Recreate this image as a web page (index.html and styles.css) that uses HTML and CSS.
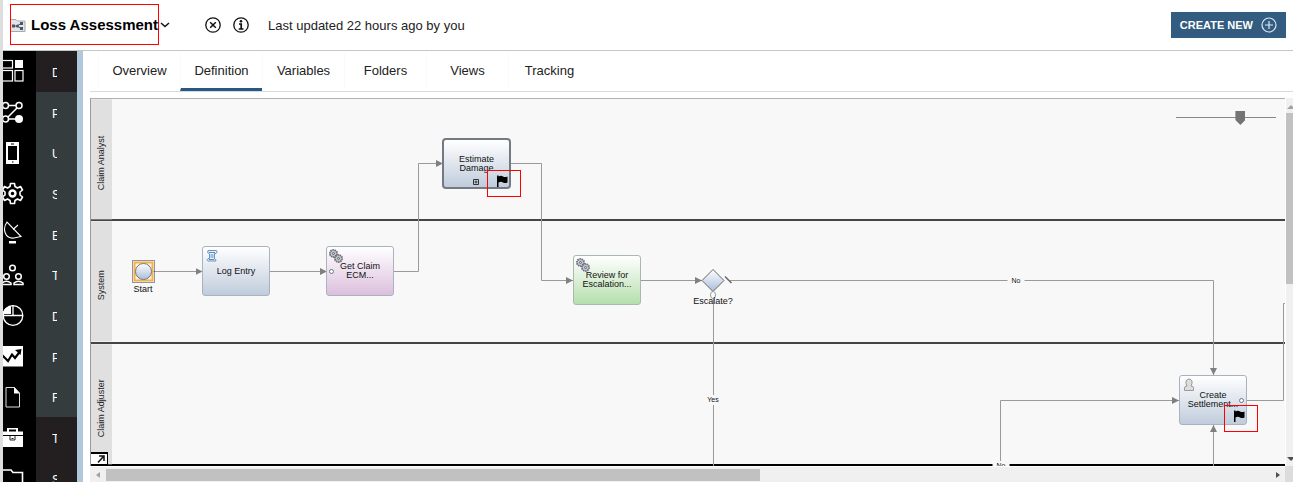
FILE: index.html
```html
<!DOCTYPE html>
<html lang="en">
<head>
<meta charset="utf-8">
<title>Loss Assessment</title>
<link rel="stylesheet" href="styles.css">
</head>
<body>
<div class="app">
  <header class="header">
    <div class="heading">
      <svg class="heading-icon" viewBox="0 0 15 16" width="15" height="16"><path d="M0 2.500H5L6.500 4H14V14.500H0" fill="#e4e4e4" stroke="#a9a9a9"/><path d="M3 9H6M6 9L10 6.500M6 9L10 11.500" stroke="#46586e" fill="none"/><rect x="1" y="7.500" width="3" height="3" fill="#46586e"/><circle cx="6.500" cy="9" r="1.600" fill="#46586e"/><rect x="9" y="5" width="3" height="3" fill="#46586e"/><rect x="9" y="10" width="3" height="3" fill="#46586e"/></svg>
      <h1 class="title">Loss Assessment</h1>
    </div>
    <button class="icon-button caret" aria-label="Open menu"><svg width="10" height="6" viewBox="0 0 10 6"><path d="M1 1L5 4.500L9 1" fill="none" stroke="#111" stroke-width="1.500"/></svg></button>
    <div class="header-tools">
      <button class="icon-button" aria-label="Close"><svg width="16" height="16" viewBox="0 0 16 16"><circle cx="8" cy="8" r="7.200" fill="none" stroke="#111" stroke-width="1.300"/><path d="M5.200 5.200L10.800 10.800M10.800 5.200L5.200 10.800" stroke="#111" stroke-width="1.500"/></svg></button>
      <button class="icon-button" aria-label="Information"><svg width="16" height="16" viewBox="0 0 16 16"><circle cx="8" cy="8" r="7.200" fill="none" stroke="#111" stroke-width="1.300"/><circle cx="8" cy="4.300" r="1.300" fill="#111"/><path d="M6 7H8.200V11.700M5.700 12H10.500" fill="none" stroke="#111" stroke-width="1.700"/></svg></button>
    </div>
    <p class="updated">Last updated 22 hours ago by you</p>
    <button class="create">CREATE NEW <svg width="16" height="16" viewBox="0 0 16 16"><g fill="none" stroke="#dce8f2" stroke-width="1.200"><circle cx="8" cy="8" r="7"/><path d="M8 4V12M4 8H12"/></g></svg></button>
  </header>

  <div class="body">
    <nav class="rail" aria-label="Categories">
      <button class="rail-item" aria-label="Dashboards"><svg viewBox="0 0 33 41"><g fill="none" stroke="#fff" stroke-width="1.200"><rect x="-1" y="9.500" width="10.500" height="7.500"/><rect x="-1" y="19.500" width="10.500" height="10.500"/><rect x="12" y="19.500" width="8" height="10.500"/></g><rect x="12" y="9" width="8" height="8" fill="#fff"/></svg></button>
      <button class="rail-item" aria-label="Processes"><svg viewBox="0 0 33 41"><g fill="none" stroke="#fff" stroke-width="1.500"><circle cx="2.500" cy="13.500" r="3"/><circle cx="16" cy="13.500" r="3"/><circle cx="2.500" cy="27" r="3"/><path d="M5.500 13.500H13M14 16L5 25M5.500 27H14"/></g><circle cx="16" cy="27" r="4" fill="#fff"/></svg></button>
      <button class="rail-item" aria-label="User interface"><svg viewBox="0 0 33 41"><path fill="#fff" fill-rule="evenodd" d="M3 9H16V31H3ZM5 13V27H14V13ZM8 10.500H11V11.500H8ZM9 28.500H10.500V29.500H9Z"/></svg></button>
      <button class="rail-item" aria-label="Services"><svg viewBox="0 0 33 41"><path fill="none" stroke="#fff" stroke-width="1.600" stroke-linejoin="round" d="M7.500 10.500H11.500L12 13.500L14.500 15L17.500 13.500L19.500 17L17 19V22L19.500 24L17.500 27.500L14.500 26L12 27.500L11.500 30.500H7.500L7 27.500L4.500 26L1.500 27.500L-.5 24L2 22V19L-.5 17L1.500 13.500L4.500 15L7 13.500Z"/><circle cx="9.500" cy="20.500" r="3" fill="none" stroke="#fff" stroke-width="2.400"/></svg></button>
      <button class="rail-item" aria-label="Events"><svg viewBox="0 0 33 41"><path fill="none" stroke="#fff" stroke-width="1.100" d="M4 8C-1 15 2 25 11 24L18 22.500ZM10 15.500L15 11"/><path fill="#fff" d="M6 27H13V29.500H6Z"/></svg></button>
      <button class="rail-item" aria-label="Teams"><svg viewBox="0 0 33 41"><g fill="none" stroke="#fff" stroke-width="1.500"><circle cx="9.500" cy="13" r="2.800"/><circle cx="3.500" cy="21.500" r="2.800"/><circle cx="15.500" cy="21.500" r="2.800"/><path d="M-1 29.500V28Q3.500 24.500 8 28V29.500ZM11 29.500V28Q15.500 24.500 20 28V29.500Z"/></g></svg></button>
      <button class="rail-item" aria-label="Data"><svg viewBox="0 0 33 41"><circle cx="10" cy="20.500" r="9.800" fill="none" stroke="#fff" stroke-width="1.300"/><path d="M-.5 20.500H20M10 10.500V20.500" stroke="#fff" stroke-width="1.300"/><path fill="#fff" d="M8 11V19H0V17Q2 12 8 11Z"/></svg></button>
      <button class="rail-item" aria-label="Performance"><svg viewBox="0 0 33 41"><path fill="#fff" d="M0 10H20V30.500H0Z"/><path d="M-1 19L5 25L9 18.500L12 22L17 15.500" fill="none" stroke="#000" stroke-width="2.200"/><path d="M12 14L18.500 13L17.500 19Z"/></svg></button>
      <button class="rail-item" aria-label="Files"><svg viewBox="0 0 33 41"><path fill="none" stroke="#ddd" d="M3 10.500H11.500L16.500 16V30H3Z"/><path fill="#fff" d="M11 10L17 16.500H11Z"/></svg></button>
      <button class="rail-item" aria-label="Toolkits"><svg viewBox="0 0 33 41"><path fill="#fff" fill-rule="evenodd" d="M4 11H15V14.500H20V18H0V14.500H4ZM6 12.500V14.500H13V12.500Z"/><path fill="#fff" d="M0 19H20V30H0Z"/><path fill="none" stroke="#222" d="M7 19V23H12V19M8.500 21.500H10.500"/></svg></button>
      <button class="rail-item" aria-label="Smart folders"><svg viewBox="0 0 33 41"><path fill="none" stroke="#fff" stroke-width="1.600" d="M-1 12H8L10 14.500H19.500V34H-1Z"/></svg></button>
    </nav>
    <nav class="library" aria-label="Library">
      <a class="library-item dark" href="#"><span>D</span></a>
      <a class="library-item" href="#"><span>P</span></a>
      <a class="library-item" href="#"><span>U</span></a>
      <a class="library-item" href="#"><span>S</span></a>
      <a class="library-item" href="#"><span>E</span></a>
      <a class="library-item" href="#"><span>T</span></a>
      <a class="library-item" href="#"><span>D</span></a>
      <a class="library-item" href="#"><span>P</span></a>
      <a class="library-item" href="#"><span>F</span></a>
      <a class="library-item dark" href="#"><span>T</span></a>
      <a class="library-item dark" href="#"><span>S</span></a>
    </nav>

    <main class="main">
      <nav class="tabs" aria-label="Process">
        <a class="tab" href="#">Overview</a>
        <a class="tab active" href="#">Definition</a>
        <a class="tab" href="#">Variables</a>
        <a class="tab" href="#">Folders</a>
        <a class="tab" href="#">Views</a>
        <a class="tab" href="#">Tracking</a>
      </nav>
      <div class="viewer">
        <div class="canvas">
          <div class="lanes">
            <section class="lane"><h2 class="lane-name">Claim Analyst</h2></section>
            <section class="lane"><h2 class="lane-name">System</h2></section>
            <section class="lane"><h2 class="lane-name">Claim Adjuster</h2></section>
          </div>

          <svg class="flows" width="1300" height="368" viewBox="91 99 1300 368">
            <defs>
              <marker id="arrow" viewBox="0 0 6 6" refX="6" refY="3" markerWidth="7" markerHeight="7" markerUnits="userSpaceOnUse" orient="auto"><path d="M0 0L6 3L0 6Z" fill="#808080"/></marker>
              <linearGradient id="blue" x2="0" y2="1"><stop stop-color="#fff"/><stop offset="1" stop-color="#a9bddb"/></linearGradient>
            </defs>
            <g fill="none" stroke="#9a9a9a" marker-end="url(#arrow)">
              <path d="M153 271.500H202.500"/>
              <path d="M270 271.500H327"/>
              <path d="M394 271.500H418.500V163.500H443"/>
              <path d="M511 163.500H541.500V280.500H573"/>
              <path d="M641 280.500H702"/>
              <path d="M730 280.500H1213.500V375"/>
              <path d="M1000.500 465V400.500H1179"/>
              <path d="M1213.500 467V425"/>
            </g>
            <path d="M713.500 298V467M1247 400.500H1283.500V303.500H1391" fill="none" stroke="#9a9a9a"/>
            <path d="M713 269.500L724 280.500L713 291.500L702 280.500Z" fill="url(#blue)" stroke="#666"/>
            <path d="M725 276.500L731.500 283" stroke="#666" stroke-width="1.500"/>
            <ellipse cx="713" cy="295" rx="2.500" ry="3.500" fill="#fff" stroke="#999"/>
            <rect x="132.500" y="260.500" width="22" height="22" fill="none" stroke="#333" stroke-dasharray="1 1"/>
            <rect x="134.500" y="262.500" width="18" height="18" fill="#fff4d8" stroke="#f0b04b" stroke-width="2"/>
            <circle cx="143.500" cy="271.500" r="8" fill="url(#blue)" stroke="#777"/>
          </svg>

          <span class="label start">Start</span>
          <span class="label escalate">Escalate?</span>
          <span class="flow-label no-top">No</span>
          <span class="flow-label yes">Yes</span>
          <span class="flow-label no-bottom">No</span>

          <button class="node log"><svg class="node-icon" viewBox="0 0 14 14"><path d="M3 1.500H11.500Q13 3 11 4.500H9.500V10Q11 10 11 12H3Q1 10.500 3 9.500H4.500V5Q1.500 4 3 1.500Z" fill="#e6f1fb" stroke="#6b93bf"/><path d="M4 3.500H10M5.500 6H8.500M5.500 8H8.500M4 10.500H9" stroke="#5a88bb"/></svg>Log Entry</button>
          <button class="node pink claim"><svg class="node-icon" viewBox="0 0 14 14"><g fill="#c4c7cc" stroke="#686c73"><circle cx="4.500" cy="4.500" r="3.600" stroke-width="1.800" stroke-dasharray="1.500 .7"/><circle cx="9.500" cy="9.500" r="3.600" stroke-width="1.800" stroke-dasharray="1.500 .7"/><circle cx="4.500" cy="4.500" r="1"/><circle cx="9.500" cy="9.500" r="1"/></g></svg><i class="port port-left"></i>Get Claim<br>ECM...</button>
          <button class="node strong estimate">Estimate<br>Damage<svg class="plus" viewBox="0 0 6 6"><path d="M.5 .5H5.500V5.500H.5ZM1.500 3H4.500M3 1.500V4.500" fill="none" stroke="#333"/></svg></button>
          <button class="node green review"><svg class="node-icon" viewBox="0 0 14 14"><g fill="#c4c7d0" stroke="#6c7080"><circle cx="4.500" cy="4.500" r="3.600" stroke-width="1.800" stroke-dasharray="1.500 .7"/><circle cx="9.500" cy="9.500" r="3.600" stroke-width="1.800" stroke-dasharray="1.500 .7"/><circle cx="4.500" cy="4.500" r="1"/><circle cx="9.500" cy="9.500" r="1"/></g></svg>Review for<br>Escalation...</button>
          <button class="node create-settlement"><svg class="node-icon" viewBox="0 0 14 14"><path d="M2.500 12.500V10Q2.500 8 5 8Q3.500 5.500 4 3Q5 1 7 1T10 3Q10.500 5.500 9 8Q11.500 8 11.500 10V12.500Z" fill="#ddd" stroke="#999"/></svg><i class="port port-right"></i>Create<br>Settlement...</button>

          <div class="mark mark-estimate"><svg width="12" height="12" viewBox="0 0 12 12"><path d="M1 .5H2.500V1.500Q5 0 7 1.500Q9 2.500 11.500 1.500V7.500Q9 8.500 7 7.500Q5 6 2.500 7.500V12H1Z"/></svg></div>
          <div class="mark mark-create"><svg width="12" height="12" viewBox="0 0 12 12"><path d="M1 .5H2.500V1.500Q5 0 7 1.500Q9 2.500 11.500 1.500V7.500Q9 8.500 7 7.500Q5 6 2.500 7.500V12H1Z"/></svg></div>

          <input class="zoom" type="range" min="0" max="100" value="66" aria-label="Zoom level">
          <button class="expand" aria-label="Expand"><svg width="16" height="10" viewBox="0 0 16 10"><path d="M0 0H16V10H0Z" fill="#fff"/><path d="M7 8.500L12 3M8 2H13V7" fill="none" stroke="#111" stroke-width="1.500"/></svg></button>
        </div>
        <div class="scroll-y"><i class="arrow-up"></i><i class="thumb-y"></i><i class="arrow-down"></i></div>
        <div class="scroll-x"><i class="arrow-left"></i><i class="thumb-x"></i><i class="arrow-right"></i></div>
        <div class="corner"></div>
      </div>
    </main>
  </div>
</div>
</body>
</html>
```
FILE: styles.css
```css
* { box-sizing: border-box; }
body { margin: 0; background: #fff; color: #222; font: 13px/16px "Liberation Sans", Arial, sans-serif; overflow: hidden; }
button { font: inherit; color: inherit; border: 0; padding: 0; background: none; }
a { color: inherit; text-decoration: none; }
h1, h2, p { margin: 0; }
svg { display: block; }

.app { display: flex; flex-direction: column; height: 100vh; border-left: 3px solid #dcdfde; }
.header { display: flex; align-items: center; flex: none; height: 51px; padding: 0 7px; border-bottom: 1px solid #bfcac8; }
.heading { display: flex; align-items: center; gap: 5px; height: 41px; margin-bottom: 1px; border: 1px solid #f00; }
.title { font-size: 15px; line-height: 20px; font-weight: bold; color: #000; white-space: nowrap; }
.caret { margin-left: 1px; }
.header-tools { display: flex; gap: 12px; margin-left: 35px; }
.updated { margin: 2px 0 0 19px; }
.create { display: flex; align-items: center; gap: 8px; height: 26px; margin-left: auto; padding: 0 9px; background: #325c80; color: #fff; font-size: 11px; font-weight: bold; }

.body { display: flex; flex: 1; min-height: 0; overflow: hidden; }
.rail, .library { display: flex; flex-direction: column; overflow: hidden; }
.rail { width: 33px; background: #000; }
.rail-item, .library-item { flex: none; height: 41px; }
.rail-item:nth-child(3n), .library-item:nth-child(3n) { height: 40px; }
.rail-item svg { width: 33px; height: 41px; }
.library { width: 41px; background: #343c3d; }
.library-item { display: flex; align-items: center; padding: 2px 0 0 16px; color: #fff; font-size: 12px; }
.library-item span { width: 5px; overflow: hidden; }
.library-item.dark { background: #231f20; }

.main { display: flex; flex-direction: column; flex: 1; min-width: 0; padding-left: 7px; border-left: 6px solid #b0c8d9; }
.tabs { display: flex; flex: none; height: 41px; padding-left: 8px; border-bottom: 1px solid #d5dade; }
.tab { display: flex; align-items: center; justify-content: center; width: 82px; height: 40px; border-left: 1px solid #fafafa; border-top: 3px solid transparent; border-bottom: 3px solid transparent; }
.tab.active { border-bottom-color: #2a5781; }

.viewer { display: grid; grid-template: minmax(0, 1fr) 16px / minmax(0, 1fr) 8px; flex: 1; min-height: 0; margin-top: 6px; }
.canvas { position: relative; overflow: hidden; background: #f8f8f8; border-top: 1px solid #b0b0b0; border-left: 1px solid #999; }
.lanes { display: flex; flex-direction: column; height: 100%; }
.lane { display: flex; flex: 1 1 0; min-height: 0; border-bottom: 2px solid #444; }
.lane:last-child { border-color: #000; }
.lane-name { width: 21px; padding-bottom: 8px; background: #e0e0e0; font-size: 9px; line-height: 20px; font-weight: normal; text-align: center; white-space: nowrap; writing-mode: vertical-rl; transform: rotate(180deg); }
.flows { position: absolute; top: 0; left: 0; }

.node { position: absolute; width: 68px; height: 50px; border: 1px solid #a9b3c0; border-radius: 3px; background: linear-gradient(#fff, #c0ccdc); font-size: 9px; line-height: 9px; text-align: center; color: #111; }
.pink { background: linear-gradient(#fff, #dcbfdc); }
.green { background: linear-gradient(#fff, #b5dfad); border-color: #aab8b0; }
.strong { border: 2px solid #747a82; border-radius: 4px; }
.node-icon { position: absolute; top: 2px; left: 2px; width: 14px; height: 14px; }
.plus { position: absolute; left: 29px; bottom: 2px; width: 6px; height: 6px; }
.port { position: absolute; top: 22px; width: 5px; height: 5px; border: 1px solid #6a7a88; border-radius: 50%; background: #fff; }
.port-left { left: 2px; }
.port-right { right: 2px; }
.log { left: 111px; top: 147px; }
.claim { left: 235px; top: 147px; }
.estimate { left: 351px; top: 39px; width: 69px; height: 51px; }
.review { left: 482px; top: 156px; }
.create-settlement { left: 1088px; top: 276px; }

.label, .flow-label { position: absolute; transform: translateX(-50%); font-size: 9px; line-height: 10px; color: #111; }
.flow-label { padding: 0 4px; font-size: 7px; background: #f8f8f8; }
.start { left: 52px; top: 185px; }
.escalate { left: 622px; top: 197px; }
.no-top { left: 925px; top: 177px; }
.yes { left: 622px; top: 296px; }
.no-bottom { left: 910px; top: 362px; }

.mark { position: absolute; width: 34px; height: 27px; padding: 4px 0 0 8px; border: 1px solid #f00; }
.mark-estimate { left: 396px; top: 71px; }
.mark-create { left: 1133px; top: 306px; }

.zoom { position: absolute; top: 10px; right: 9px; width: 100px; height: 16px; margin: 0; appearance: none; background: linear-gradient(#888, #888) center / 100% 1px no-repeat; }
.zoom::-webkit-slider-thumb { appearance: none; width: 10px; height: 14px; margin-top: 2px; background: #747474; clip-path: polygon(0 0, 100% 0, 100% 65%, 50% 100%, 0 65%); }
.expand { position: absolute; left: 0; bottom: 1px; padding: 2px 1px 1px 0; background: #000; }

.scroll-x, .scroll-y { display: flex; align-items: center; background: #f0f0f0; }
.scroll-y { flex-direction: column; margin-left: 1px; overflow: hidden; padding: 7px 0 5px; }
.scroll-x { padding: 2px 5px 1px 6px; border-top: 1px solid #fff; }
.thumb-x { width: calc(55% + 3px); height: 12px; margin-left: 6px; background: #c1c1c1; }
.thumb-y { width: 100%; height: 48%; margin-top: 4px; background: #c1c1c1; }
.arrow-left, .arrow-right { border: 3px solid transparent; border-width: 3px 4px; }
.arrow-left { border-left: 0; border-right-color: #a3a3a3; }
.arrow-right { margin-left: auto; border-right: 0; border-left-color: #505050; }
.arrow-up, .arrow-down { margin-left: 3px; border: 4px solid transparent; }
.arrow-up { border-top: 0; border-bottom-color: #a3a3a3; }
.arrow-down { margin-top: auto; border-bottom: 0; border-top-color: #505050; }
.corner { background: #dcdcdc; }
```
